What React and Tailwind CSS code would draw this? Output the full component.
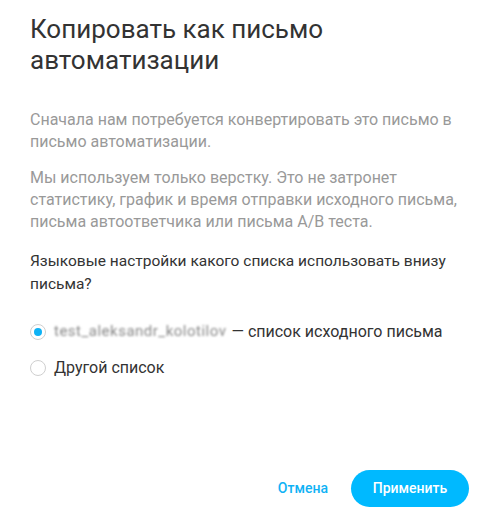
export default function App() {
  return (
    <div className="w-[482px] h-[522px] bg-white flex flex-col pl-[30px] pr-[13px] pt-[14px] pb-[15px]" style={{ fontFamily: "Roboto, 'Noto Sans', sans-serif" }}>
      <div className="pr-[3px]">
        <h1 className="text-[26px] leading-[31px] text-[#333333] font-normal">
          Копировать как письмо<br />автоматизации
        </h1>
        <p className="mt-[33px] pr-[12px] text-[16px] leading-[22px] text-[#999999]">
          Сначала нам потребуется конвертировать это письмо в письмо автоматизации.
        </p>
        <p className="mt-[14px] text-[16px] leading-[22px] text-[#999999]">
          Мы используем только верстку. Это не затронет статистику, график и время отправки исходного письма, письма автоответчика или письма A/B теста.
        </p>
        <p className="mt-[17px] pr-[12px] text-[15.5px] leading-[23px] text-[#333333]">
          Языковые настройки какого списка использовать внизу письма?
        </p>
        <div className="mt-[24px] flex flex-col gap-[13px]">
          <label className="flex items-center gap-[8px] h-[23px] whitespace-nowrap">
            <span className="w-[16px] h-[16px] rounded-full border border-[#cfcfcf] flex items-center justify-center">
              <span className="w-[8px] h-[8px] rounded-full bg-[#0fb2f5]" />
            </span>
            <span className="text-[16px] text-[#333333] flex items-center">
              <span className="text-[#888888] text-[15px] blur-[1.2px] tracking-[0.5px]">test_aleksandr_kolotilov</span>
              <span className="ml-[5px]">— список исходного письма</span>
            </span>
          </label>
          <label className="flex items-center gap-[8px] h-[23px]">
            <span className="w-[16px] h-[16px] rounded-full border border-[#cfcfcf]" />
            <span className="text-[16px] text-[#333333]">Другой список</span>
          </label>
        </div>
      </div>
      <div className="mt-auto flex items-center justify-end gap-[23px]">
        <button className="text-[14px] font-medium text-[#0fb2f5]">Отмена</button>
        <button className="w-[118px] h-[37px] rounded-full bg-[#00b9ff] text-white text-[14px] font-medium">Применить</button>
      </div>
    </div>
  );
}
